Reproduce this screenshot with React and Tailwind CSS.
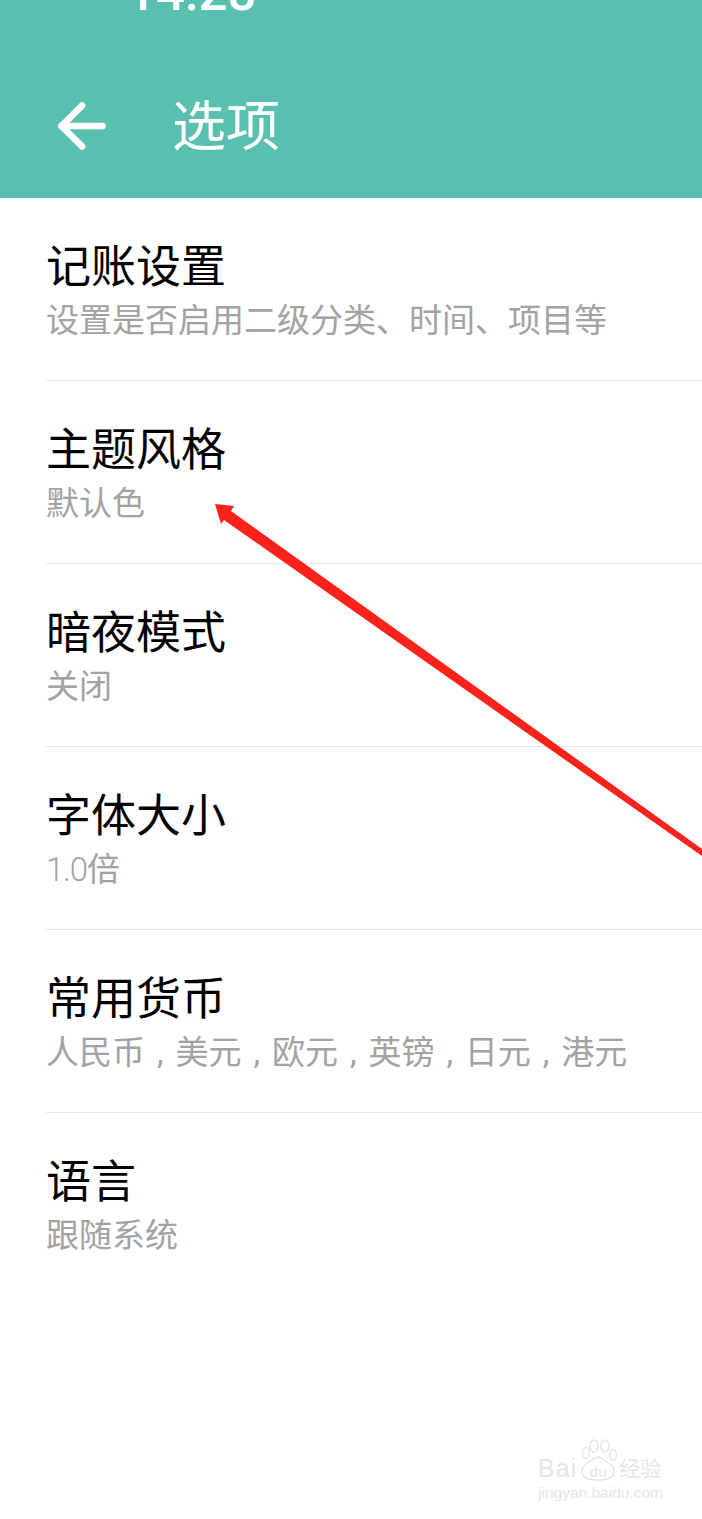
import { ArrowLeft } from 'lucide-react'

const options = [
  { title: '记账设置', desc: '设置是否启用二级分类、时间、项目等' },
  { title: '主题风格', desc: '默认色' },
  { title: '暗夜模式', desc: '关闭' },
  { title: '字体大小', desc: <><span className="font-light tracking-[-1.2px]">1.0</span>倍</> },
  { title: '常用货币', desc: '人民币 , 美元 , 欧元 , 英镑 , 日元 , 港元' },
  { title: '语言', desc: '跟随系统' },
]

const cjk = "font-['Roboto','Noto_Sans_CJK_SC',sans-serif]"

function Row({ title, desc }) {
  return (
    <div className="ml-[46px] h-[183px] border-b border-[#e6e6e6] last:border-b-0 pt-[42px]">
      <div className="text-[45px] leading-[56px] text-black whitespace-nowrap">{title}</div>
      <div className="text-[33px] leading-[50px] text-[#a2a2a2] whitespace-nowrap [word-spacing:3.8px]">{desc}</div>
    </div>
  )
}

function Watermark() {
  return (
    <div className="absolute right-[39px] bottom-[17px] flex flex-col items-start text-[#e6e6e6]">
      <div className="flex items-end">
        <span className="text-[25px] leading-[26px] tracking-[1px] font-['Liberation_Sans',sans-serif]">Bai</span>
        <div className="relative w-[42px] h-[42px] flex items-end justify-center">
          <svg className="absolute inset-0" width="42" height="42" viewBox="0 0 42 42" fill="none" stroke="currentColor" strokeWidth="1.4">
            <ellipse cx="9" cy="14" rx="3.5" ry="5.5" />
            <ellipse cx="17" cy="7" rx="4" ry="6" />
            <ellipse cx="28" cy="7" rx="4" ry="6" />
            <ellipse cx="36" cy="16" rx="3.5" ry="5.5" />
            <path d="M21 18c-4 0-6 3-10 6-5 3-7 6-6 10 1 5 6 7 16 7s15-2 16-7c1-4-1-7-6-10-4-3-6-6-10-6z" />
          </svg>
          <span className="relative text-[15px] leading-[18px] font-['Liberation_Sans',sans-serif]">du</span>
        </div>
        <span className="text-[21px] leading-[24px]">经验</span>
      </div>
      <div className="mt-[3px] text-[15.5px] leading-[18px] font-['Liberation_Sans',sans-serif] whitespace-nowrap">jingyan.baidu.com</div>
    </div>
  )
}

export default function App() {
  return (
    <div className={`relative w-[702px] h-[1519px] overflow-hidden bg-white ${cjk}`}>
      {/* 顶部栏 */}
      <div className="h-[198px] bg-[#59c0b0] overflow-hidden">
        <div className="-mt-[32px] pl-[127px] text-[51px] leading-[50px] font-medium text-white">14:28</div>
        <div className="mt-[76px] flex items-center pl-[47px]">
          <ArrowLeft className="w-[70px] h-[70px] -mt-[3px] text-white" strokeWidth={2.3} />
          <span className="ml-[55px] text-[54px] leading-[64px] text-white">选项</span>
        </div>
      </div>

      <div>
        {options.map((o) => (
          <Row key={o.title} title={o.title} desc={o.desc} />
        ))}
      </div>

      {/* 红色箭头标注 */}
      <svg className="absolute left-0 top-0 pointer-events-none" width="702" height="1519">
        <polygon
          points="215,504 234,506 231,511 702,849 702,856 224,520 221,524"
          fill="#f9231b"
        />
      </svg>

      <Watermark />
    </div>
  )
}
